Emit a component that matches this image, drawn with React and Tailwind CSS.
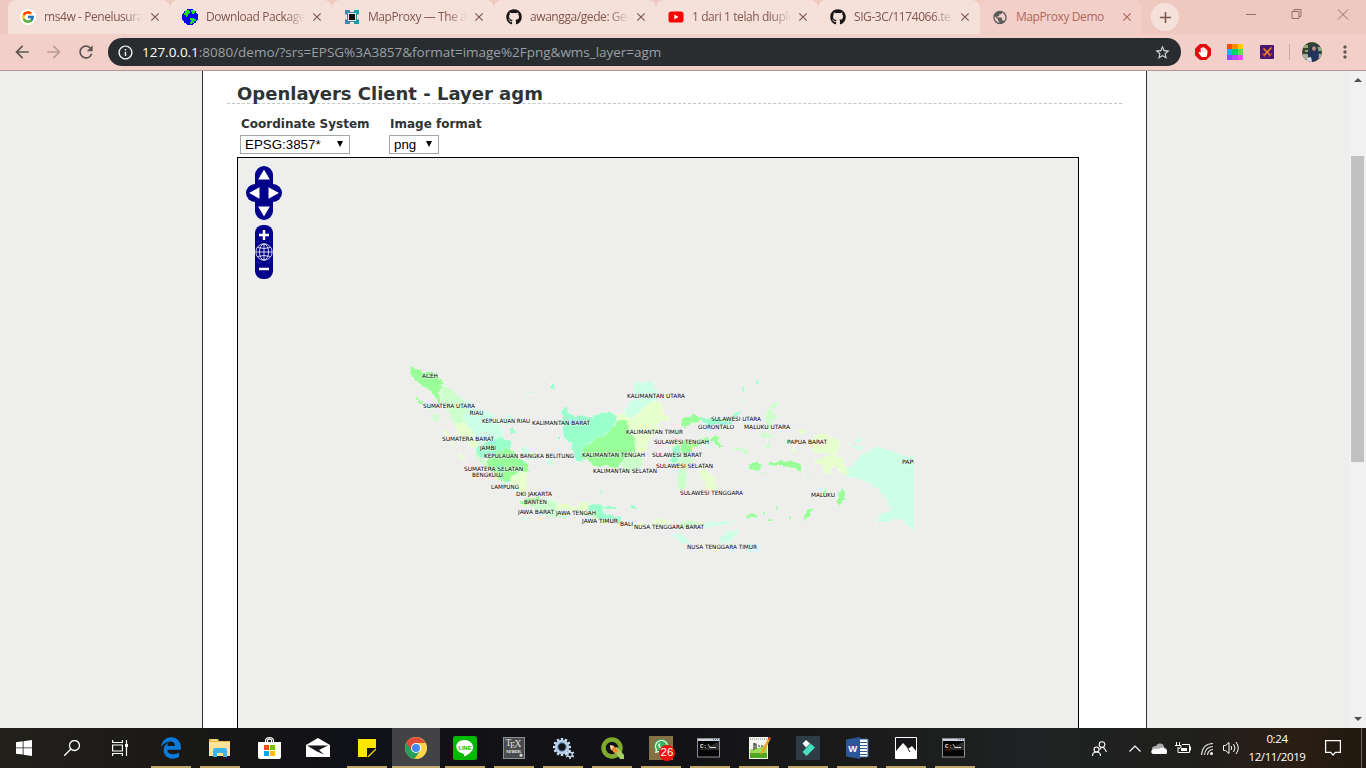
import React from 'react';
import { MdArrowBack, MdArrowForward, MdRefresh, MdInfoOutline, MdStarBorder, MdMoreVert, MdPublic, MdClose, MdAdd } from 'react-icons/md';
import { FaGithub, FaEdgeLegacy, FaHandPaper, FaWhatsapp } from 'react-icons/fa';
import { FcGoogle } from 'react-icons/fc';

const G = '#99ff99';
const L = '#ccffcc';
const A = '#99ffcc';
const M = '#ccffe6';
const Y = '#e6ffcc';

const west = [
  [G, '28,34 34,34 45,42 58,46 70,54 82,50 92,49 106,58 120,68 130,84 122,90 118,105 120,140 125,145 118,146 105,130 95,110 76,98 60,90 45,72 32,58'],
  [G, '44,127 52,128 62,138 70,142 68,148 56,142'],
  [L, '122,90 136,92 150,100 165,118 190,135 205,152 200,175 190,185 192,205 175,210 160,210 150,180 140,160 122,145'],
  [M, '205,152 225,160 250,165 285,180 300,210 312,236 305,255 275,262 235,270 215,235 195,212 190,185'],
  [Y, '163,208 195,205 215,230 232,255 237,276 215,278 200,255 175,235'],
  [A, '225,285 240,274 270,255 300,250 325,252 335,265 335,280 322,284 315,285 300,295 265,305 250,312 228,300'],
  [G, '300,290 318,280 335,284 345,295 350,305 375,318 385,330 382,355 360,352 340,362 325,385 300,375 280,352 262,335 258,316'],
  [L, '222,292 250,310 262,335 300,375 330,398 318,392 290,370 245,325 225,302'],
  [Y, '340,362 358,352 380,350 381,400 365,402 358,412 345,405 325,385'],
  [L, '98,172 110,180 118,198 108,198 98,184'],
  [L, '90,160 98,164 95,170'],
  [Y, '130,225 138,225 150,240 142,248 134,238'],
  [Y, '146,256 158,264 164,278 154,270'],
  [Y, '170,294 182,300 198,322 190,320'],
  [M, '310,190 330,180 340,186 328,195 325,214 312,208'],
  [A, '326,228 338,215 347,228 336,238'],
  [M, '360,280 375,275 388,290 400,302 396,315 376,312 370,296'],
  [M, '440,310 460,308 456,326 440,328'],
  [A, '450,88 462,90 464,102 454,104'],
  [A, '374,126 380,122 378,130'],
  [A, '390,112 396,114 393,118'],
  [G, '360,445 380,428 400,430 418,425 420,440 400,450 384,452'],
  [L, '400,442 420,436 445,432 462,436 472,452 482,465 500,480 500,490 460,488 430,478 400,455'],
];

const center = [
  [A, '35,145 40,132 48,127 55,142 75,158 90,150 112,156 125,158 150,147 175,142 202,150 195,170 190,185 175,205 160,215 135,220 120,235 97,248 98,290 80,292 72,275 68,260 65,238 45,220 40,205 38,175'],
  [G, '97,245 125,235 135,220 165,213 190,185 200,170 214,167 232,168 235,190 250,210 258,225 255,240 258,255 245,262 235,275 215,290 210,305 185,308 172,300 150,305 125,303 125,290 98,278'],
  [L, '245,262 278,262 276,282 278,305 245,318 228,322 215,308 215,290 235,275'],
  [Y, '195,165 205,145 225,148 240,160 270,140 290,120 310,105 330,115 338,125 340,148 352,150 360,162 335,168 322,185 318,205 298,222 290,240 280,265 258,262 254,240 258,225 235,190 232,168 214,167'],
  [M, '250,55 280,50 310,50 312,70 325,80 325,100 312,105 290,120 270,140 240,160 222,148 225,135 240,110 258,95 252,75'],
  [G, '392,182 398,160 415,152 425,158 430,148 442,150 455,158 450,168 425,175 410,182 402,195 398,180'],
  [G, '390,240 398,228 415,228 426,240 428,262 405,268 390,255'],
  [A, '446,160 470,158 500,162 525,162 540,158 540,180 500,176 480,180 458,172'],
  [A, '356,285 366,275 368,250 384,238 390,250 392,265 385,290 370,295'],
  [L, '385,290 400,268 420,270 428,290 410,310 408,350 410,375 385,378 380,350 386,330'],
  [Y, '448,305 475,315 478,330 500,340 490,352 500,362 498,375 480,378 465,368 468,345 450,335'],
  [G, '424,240 448,226 472,216 476,230 450,240 432,252'],
  [L, '450,210 472,204 470,210 452,214'],
  [G, '478,224 500,212 512,218 500,228 514,250 500,238 484,230'],
  [L, '0,400 20,410 25,430 40,440 0,434'],
  [Y, '20,422 50,418 82,425 92,408 118,414 118,440 100,448 70,440 25,438'],
  [A, '118,420 155,418 162,430 160,445 190,452 212,455 212,478 190,475 165,470 140,458 100,448 118,440'],
  [A, '160,425 182,423 204,424 190,433 162,432'],
  [A, '238,424 248,418 262,430 248,432'],
  [L, '216,470 236,465 252,478 236,488'],
  [Y, '254,480 264,470 280,475 280,490 262,492'],
  [Y, '300,478 325,460 345,468 362,465 356,485 320,486'],
  [L, '370,480 400,470 430,466 450,476 430,484 400,490 375,492'],
  [M, '455,475 480,472 510,470 540,470 540,478 500,482 460,488'],
  [M, '362,508 390,508 408,520 422,532 390,534 378,516'],
  [M, '518,530 530,510 560,495 560,510 535,530'],
  [A, '0,58 12,56 14,66 4,74'],
  [A, '24,212 30,216 30,226'],
  [A, '148,382 156,380 156,388'],
];

const east = [
  [M, '372,300 384,310 395,305 405,294 415,280 425,268 450,260 465,246 475,245 500,256 520,262 550,272 582,276 582,497 560,478 545,462 520,465 500,470 470,472 480,450 500,438 518,435 505,420 500,400 475,370 440,350 400,338 382,335 385,320'],
  [M, '395,218 420,222 424,236 405,225'],
  [M, '375,228 400,240 440,250 420,254 398,244'],
  [Y, '265,240 280,225 282,210 305,205 325,212 350,218 357,230 355,260 342,270 368,278 372,300 385,322 378,332 350,312 338,300 330,325 312,326 308,302 285,290 290,282 325,275 338,264 300,266 280,262'],
  [Y, '228,198 245,194 262,200 245,206'],
  [Y, '210,258 226,250 230,257 218,261'],
  [G, '85,300 95,293 110,292 127,303 120,315 100,319 88,312'],
  [G, '148,300 150,290 175,292 180,285 205,290 215,286 225,292 236,295 245,312 238,319 225,308 205,306 185,300 165,306'],
  [G, '352,410 355,390 366,370 372,380 378,400 364,415 358,423'],
  [G, '248,455 262,436 280,428 270,450 262,458 256,466'],
  [G, '78,455 95,445 112,450 102,458 88,458'],
  [G, '126,445 134,442 134,448'],
  [G, '138,463 158,464 158,468 140,468'],
  [G, '165,430 174,426 172,434'],
  [G, '204,456 214,456 212,462'],
  [G, '120,325 128,320 132,324'],
  [G, '256,326 264,324 264,330'],
  [L, '135,185 136,150 150,122 160,118 165,108 173,114 170,124 158,128 156,145 175,148 172,162 158,160 156,176 148,195'],
  [L, '122,204 155,208 158,218 140,215 142,226 126,214'],
  [L, '132,242 146,236 156,246 138,250'],
  [L, '30,252 55,248 80,254 85,272 60,256'],
  [A, '0,172 30,170 38,152 56,136 60,144 46,160 36,178 0,178'],
  [A, '106,64 108,48 113,42 113,56'],
  [A, '64,70 72,72 75,80 69,80'],
  [A, '64,100 68,102 66,110'],
  [M, '2,520 20,502 54,494 54,506 38,520 22,536 0,532'],
  [M, '0,470 20,468 24,474 2,478'],
  [M, '32,468 50,464 55,470 34,472'],
  [G, '302,388 310,378 322,370 318,384 306,392'],
  [G, '0,230 6,245 0,252'],
];

const labels = [
  ['ACEH', 422, 16, 378.5], ['SUMATERA UTARA', 423, 52, 408.5], ['RIAU', 469.5, 14, 415.5],
  ['KEPULAUAN RIAU', 482, 48, 423.5], ['KALIMANTAN BARAT', 532, 58, 425.5], ['SUMATERA BARAT', 442, 52, 442],
  ['JAMBI', 480, 16, 451], ['KEPULAUAN BANGKA BELITUNG', 484, 90, 458.5], ['SUMATERA SELATAN', 464, 59, 471.5],
  ['BENGKULU', 472, 31, 477.5], ['LAMPUNG', 491, 28, 490], ['DKI JAKARTA', 516, 36, 497],
  ['BANTEN', 524, 23, 505], ['JAWA BARAT', 518, 36, 515], ['JAWA TENGAH', 556, 40, 516],
  ['JAWA TIMUR', 582, 36, 523.5], ['BALI', 620, 13, 527], ['NUSA TENGGARA BARAT', 634, 70, 529.5],
  ['NUSA TENGGARA TIMUR', 687, 70, 549.5], ['KALIMANTAN UTARA', 627, 58, 398.5], ['KALIMANTAN TIMUR', 626, 57, 434.5],
  ['SULAWESI TENGAH', 654, 55, 445], ['KALIMANTAN TENGAH', 582, 63, 458], ['SULAWESI BARAT', 652, 50, 457.5],
  ['SULAWESI SELATAN', 656, 57, 468.5], ['KALIMANTAN SELATAN', 593, 64, 474], ['SULAWESI TENGGARA', 680, 63, 495.5],
  ['SULAWESI UTARA', 711, 50, 421.5], ['GORONTALO', 698, 36, 429.5], ['MALUKU UTARA', 744, 46, 430],
  ['PAPUA BARAT', 787, 40, 445], ['PAPUA', 902, 20, 465], ['MALUKU', 811, 24, 497.5],
];

function Regions({ shapes, x, y }) {
  return (
    <g transform={`translate(${x} ${y}) scale(0.33333)`}>
      {shapes.map(([fill, points], i) => (
        <g key={i}>
          <polygon points={points} fill="none" stroke="#fbfffb" strokeWidth="5" strokeDasharray="3 7" strokeOpacity="0.7" />
          <polygon points={points} fill={fill} />
        </g>
      ))}
    </g>
  );
}

function IndonesiaMap() {
  return (
    <svg className="block h-[570px] w-[840px]" viewBox="238 158 840 570">
      <defs>
        <clipPath id="extent"><rect x="238" y="158" width="676" height="570" /></clipPath>
        <filter id="coast" filterUnits="userSpaceOnUse" x="390" y="350" width="550" height="220" colorInterpolationFilters="sRGB">
          <feTurbulence type="fractalNoise" baseFrequency="0.22" numOctaves="2" seed="4" result="noise" />
          <feDisplacementMap in="SourceGraphic" in2="noise" scale="5" xChannelSelector="R" yChannelSelector="G" />
        </filter>
      </defs>
      <g clipPath="url(#extent)">
        <g filter="url(#coast)">
          <Regions shapes={west} x={400} y={355} />
          <Regions shapes={center} x={550} y={365} />
          <Regions shapes={east} x={720} y={365} />
          <path d="M910 457.500h8v74l-8-9z" fill={M} />
        </g>
        <g transform="translate(0 -0.7)" fontFamily="'DejaVu Sans', sans-serif" fontSize="5.9" fill="#000" stroke="#ffffff" strokeWidth="1.2" strokeOpacity="0.6" paintOrder="stroke">
          {labels.map(([t, x, w, y]) => (
            <text key={t} x={x} y={y} textLength={w} lengthAdjust="spacingAndGlyphs">{t}</text>
          ))}
        </g>
      </g>
    </svg>
  );
}

function EarthIcon() {
  return (
    <svg viewBox="0 0 16 16" className="size-4" shapeRendering="crispEdges">
      <circle cx="8" cy="8" r="8" fill="#0000fa" />
      <path d="M4 1h3v1h1v2H7v1H6v2H5v1H4V6H2V4h1V2h1z M9 1h3v1h1v2h-1v1h-2V3H9z M8 9h4v1h2v2h-2v2h-2v1H8v-2h1v-2H8z" fill="#1fe01f" />
    </svg>
  );
}

function MapProxyIcon() {
  return (
    <svg viewBox="0 0 14 14" className="size-3.5">
      <path d="M0 0h5v2h4V0h5v5h-2v4h2v5H9v-2H5v2H0V9h2V5H0z" fill="#2a93a7" />
      <path d="M3 3h8v8H3z" fill="#f5e0da" />
      <path d="M4 4h6v6H4z" fill="#111" />
      <path d="M0 5h2M12 5h2M0 9h2M12 9h2" stroke="#f5e0da" strokeWidth="1" />
    </svg>
  );
}

function YouTubeIcon() {
  return (
    <svg viewBox="0 0 16 12" className="h-3 w-4">
      <rect x="0.5" y="0.5" width="15" height="11" rx="2.6" fill="#f00" />
      <path d="M6.3 3.6v4.8L10.5 6z" fill="#fff" />
    </svg>
  );
}

const tabs = [
  ['ms4w - Penelusuran Google', <span className="flex size-4 items-center justify-center rounded-full bg-white"><FcGoogle size={14} /></span>],
  ['Download Packages', <EarthIcon />],
  ['MapProxy — The accelerating', <MapProxyIcon />],
  ['awangga/gede: Geospatial', <FaGithub size={16} color="#1b1616" />],
  ['1 dari 1 telah diupload', <YouTubeIcon />],
  ['SIG-3C/1174066.tex at', <FaGithub size={16} color="#1b1616" />],
];

function Tab({ title, icon, active, last }) {
  return (
    <div className={active ? 'flex h-[34px] w-[162px] items-center rounded-t-lg bg-[#f2d0c9] pl-3' : 'relative flex h-[34px] w-[162px] items-center rounded-t-lg bg-[#f5e0da] pl-3'}>
      <div className="flex size-4 shrink-0 items-center justify-center">{icon}</div>
      <div
        className={active
          ? "ml-2 w-[100px] overflow-hidden font-['Open_Sans',sans-serif] text-[12px] leading-4 tracking-[-0.42px] whitespace-nowrap text-[#b0685c]"
          : "ml-2 w-[99px] overflow-hidden [mask-image:linear-gradient(to_right,black_80%,transparent)] font-['Open_Sans',sans-serif] text-[12px] leading-4 tracking-[-0.42px] whitespace-nowrap text-[#80584f]"}
      >
        {title}
      </div>
      <MdClose className={active ? 'ml-[4px] shrink-0' : 'ml-[5px] shrink-0'} size={14} color={active ? '#b0685c' : '#7d5750'} />
      {!active && !last && <div className="absolute top-[7px] right-[-1px] h-5 w-px bg-[#a98780]" />}
    </div>
  );
}

function TabStrip() {
  return (
    <div className="flex h-[34px] bg-[#efc8c0] pl-2">
      {tabs.map(([title, icon], i) => <Tab key={i} title={title} icon={icon} last={i === tabs.length - 1} />)}
      <Tab active title="MapProxy Demo" icon={<MdPublic size={17} color="#5b5b5b" />} />
      <div className="mt-[3px] ml-[9px] flex size-7 items-center justify-center rounded-full bg-[#f5e0da]">
        <MdAdd size={19} color="#7d5750" />
      </div>
      <svg className="ml-[67px] h-[34px] w-[110px]" viewBox="0 0 110 34" fill="none" stroke="#8e736d">
        <path d="M0 14.500h10M46 11.500h7v7h-7zM48 11.500v-2h7v7h-2M92 9.500l10 10M102 9.500l-10 10" />
      </svg>
    </div>
  );
}

function Toolbar() {
  return (
    <div className="flex h-[37px] items-center border-b border-[#b19590] bg-[#f2d0c9] pl-3">
      <MdArrowBack size={20} color="#5f5653" />
      <MdArrowForward className="ml-3" size={20} color="#b99d97" />
      <MdRefresh className="ml-3" size={20} color="#5f5653" />
      <div className="ml-3 flex h-7 w-[1073px] items-center rounded-full bg-[#292d30] pl-[9px]">
        <MdInfoOutline size={17} color="#f1f3f4" />
        <div className="ml-2 flex-1 font-['Open_Sans',sans-serif] text-[13.500px] leading-5 tracking-[-0.015px] whitespace-nowrap text-[#9aa0a6]">
          <span className="text-white">127.0.0.1</span>:8080/demo/?srs=EPSG%3A3857&amp;format=image%2Fpng&amp;wms_layer=agm
        </div>
        <MdStarBorder className="mr-[10px]" size={17} color="#d5d8da" />
      </div>
      <div className="ml-[14px] flex size-4 items-center justify-center bg-[#e30b0b] [clip-path:polygon(30%_0,70%_0,100%_30%,100%_70%,70%_100%,30%_100%,0_70%,0_30%)]">
        <FaHandPaper size={10} color="#fff" />
      </div>
      <svg className="ml-4 size-4" viewBox="0 0 16 16" shapeRendering="crispEdges">
        <path fill="#ff4d00" d="M0 0h5v5H0z" /><path fill="#ff8a00" d="M5 0h6v5H5z" /><path fill="#ffd000" d="M11 0h5v5h-5z" />
        <path fill="#00b8ff" d="M0 5h5v6H0z" /><path fill="#00d464" d="M5 5h6v6H5z" /><path fill="#5fe04a" d="M11 5h5v6h-5z" />
        <path fill="#8a4bff" d="M0 11h5v5H0z" /><path fill="#b44bff" d="M5 11h6v5H5z" /><path fill="#f545ff" d="M11 11h5v5h-5z" />
      </svg>
      <svg className="ml-[17px] size-[14px]" viewBox="0 0 14 14">
        <rect width="14" height="14" rx="1" fill="#4a1670" />
        <path d="M3.500 3.500l7 7M11.500 2.500L4 10.500" stroke="#ff8c1a" strokeWidth="1.500" />
        <path d="M2.500 8.500l3 3M11.500 8.500l-3 3" stroke="#c9562a" strokeWidth="1.200" />
      </svg>
      <div className="ml-[15px] h-4 w-px bg-[#ccaaa3]" />
      <svg className="ml-[12px] size-5" viewBox="0 0 20 20">
        <clipPath id="avatar"><circle cx="10" cy="10" r="10" /></clipPath>
        <g clipPath="url(#avatar)">
          <rect width="20" height="20" fill="#36472f" />
          <path d="M0 3h6v3H0zM14 5h6v4h-6zM3 8h3v2H3z" fill="#8fa878" />
          <path d="M1 12h5v5H1zM15 12h5v4h-5z" fill="#a9b0a2" />
          <path d="M8 6c1-5 8-4 8 1l1 8-5 5H7l1-6-3-2z" fill="#24345c" />
          <ellipse cx="12" cy="6.500" rx="2" ry="2.300" fill="#b98a76" />
          <path d="M5 16l4-1 1 5H4z" fill="#dfe2ea" />
        </g>
      </svg>
      <MdMoreVert className="ml-[13px]" size={20} color="#5f5653" />
    </div>
  );
}

function Select({ label, value, className }) {
  return (
    <div className={className}>
      <div className="pl-px font-['DejaVu_Sans',sans-serif] text-[12px] leading-[20px] font-bold whitespace-nowrap text-[#2e3436]">{label}</div>
      <div className="mt-px flex h-[19px] w-fit items-center border border-[#a6a6a6] bg-white pl-1 font-['Liberation_Sans',Arial,sans-serif] text-[13.333px] text-black">
        <span className="pt-px leading-4">{value}</span>
        <svg className="mr-[6px] mb-px ml-auto h-[6px] w-[6px]" viewBox="0 0 6 6"><path d="M0 0h6L3 6z" fill="#000" /></svg>
      </div>
    </div>
  );
}

function PanZoom() {
  return (
    <svg className="absolute top-2 left-2 h-[114px] w-9" viewBox="0 0 36 114">
      <g fill="#00008b">
        <rect x="9" y="0" width="18" height="54" rx="9" />
        <rect x="0" y="18" width="36" height="18" rx="9" />
        <rect x="9" y="59" width="18" height="54" rx="8" />
      </g>
      <path d="M18 3.500l5.800 10h-11.600zM18 50.500l5.800-10h-11.600zM3 27l10.500-5.800v11.600zM33 27l-10.500-5.800v11.600z" fill="#fff" />
      <path d="M13 69h10M18 64v10M13 103h10" stroke="#fff" strokeWidth="2.500" />
      <g fill="none" stroke="#fff" strokeWidth="0.800">
        <circle cx="18" cy="86" r="8.200" />
        <ellipse cx="18" cy="86" rx="4.500" ry="8" />
        <path d="M18 78v16M10 86h16M11.500 81.500q6.500 2 13 0M11.500 90.500q6.500-2 13 0" />
      </g>
    </svg>
  );
}

function Page() {
  return (
    <div className="flex h-[657px] bg-[#eeeeec]">
      <div className="ml-[202px] w-[945px] border-x border-[#2e3436] bg-white pl-6">
        <div className="mt-[9px] h-6 w-[895px] border-b border-dashed border-[#c4c6c6] pl-[10px]">
          <h2 className="font-['DejaVu_Sans',sans-serif] text-[18px] leading-[27px] font-bold whitespace-nowrap text-[#2e3436]">Openlayers Client - Layer agm</h2>
        </div>
        <div className="flex pt-[10px] pl-[13px]">
          <Select label="Coordinate System" value="EPSG:3857*" className="w-[149px] [&>div:last-child]:w-[110px]" />
          <Select label="Image format" value="png" className="[&>div:last-child]:w-[50px]" />
        </div>
        <div className="relative mt-[3px] ml-[10px] h-[571px] w-[842px] overflow-hidden border border-b-0 border-black bg-[#eeeeec]">
          <IndonesiaMap />
          <PanZoom />
        </div>
      </div>
      <div className="ml-auto flex w-[17px] flex-col items-center bg-[#f1f1f1]">
        <svg className="mt-[7px] h-[4px] w-[8px]" viewBox="0 0 8 4"><path d="M0 4L4 0l4 4z" fill="#505050" /></svg>
        <div className="mt-[74px] h-[306px] w-[13px] bg-[#c1c1c1]" />
        <svg className="mt-auto mb-[7px] h-[4px] w-[8px]" viewBox="0 0 8 4"><path d="M0 0l4 4 4-4z" fill="#505050" /></svg>
      </div>
    </div>
  );
}

function Terminal() {
  return (
    <svg className="mr-[3px] h-[20px] w-[23px]" viewBox="0 0 23 20">
      <rect x="0.500" y="0.500" width="22" height="18.500" fill="#050505" stroke="#8d8f94" />
      <path d="M1 1h21v2H1z" fill="#cfd3dc" /><path d="M16 1.500h5" stroke="#5b6da0" strokeDasharray="1 1" />
      <path d="M1 12Q12 10 22 3v9z" fill="#555" opacity="0.500" />
      <text x="3" y="9.500" fontSize="6" fontFamily="'Liberation Mono', monospace" fontWeight="bold" fill="#eee">C:\.</text><path d="M13 9.500h6" stroke="#ddd" />
    </svg>
  );
}

const gearTeeth = [0, 30, 60, 90, 120, 150, 180, 210, 240, 270, 300, 330];

const apps = [
  { line: true, icon: <FaEdgeLegacy size={22} color="#0a7bdc" /> },
  { line: true, icon: (
    <svg className="h-[20px] w-[22px]" viewBox="0 0 22 20">
      <path d="M0 1h9l1 2h11v15H0z" fill="#e9bb4c" /><path d="M1 4h20v14H0V4z" fill="#ffe395" /><path d="M2 2h6" stroke="#fff3c4" />
      <path d="M4 19v-7q0-2 2-2h10q2 0 2 2v7h-4v-4H8v4z" fill="#3db4e6" />
    </svg>) },
  { icon: (
    <svg className="h-[24px] w-[23px]" viewBox="0 0 23 24">
      <path d="M7.500 7V5q0-3.500 4-3.500t4 3.500v2M9.500 6V4q2-2 4 0v2" fill="none" stroke="#fff" strokeWidth="1.200" />
      <path d="M0 6h23v15q0 2-2 2H2q-2 0-2-2z" fill="#fff" />
      <path fill="#f25022" d="M6 9h5v5H6z" /><path fill="#7fba00" d="M12 9h5v5h-5z" /><path fill="#00a4ef" d="M6 15h5v5H6z" /><path fill="#ffb900" d="M12 15h5v5h-5z" />
    </svg>) },
  { icon: (
    <svg className="h-[20px] w-6" viewBox="0 0 24 20"><path d="M0 7l12-7 12 7v12H0z" fill="#fff" /><path d="M1 7.500h21l-9 4.500 5 4.500-7-3z" fill="#15151a" /></svg>) },
  { line: true, icon: (
    <svg className="size-[18px]" viewBox="0 0 18 18"><path d="M0 0h18v18H0z" fill="#ffe600" /><path d="M9 18V9h9v1l-8 8z" fill="#121216" /><path d="M18 10v8h-8z" fill="#121216" /><path d="M9.500 9.500h8l-8 8z" fill="#121216" /><path d="M10 18l8-8" stroke="#ffe600" strokeWidth="1.200" /></svg>) },
  { line: true, active: true, icon: (
    <svg className="size-[22px]" viewBox="0 0 22 22">
      <circle cx="11" cy="11" r="11" fill="#fdd34c" />
      <path d="M11 11L1.500 5.500A11 11 0 0 0 9.500 21.900L15.500 13z" fill="#24a05a" />
      <path d="M11 11l4.500 2.600-5.200 8.400A11 11 0 0 0 20.600 6H11z" fill="#fdd34c" />
      <path d="M11 11L6.300 13.500 1.500 5.500A11 11 0 0 1 20.500 6H11z" fill="#e14b3c" />
      <circle cx="11" cy="11" r="5" fill="#fff" /><circle cx="11" cy="11" r="4" fill="#4688f1" />
    </svg>) },
  { line: true, icon: (
    <svg className="size-6" viewBox="0 0 24 24">
      <rect width="24" height="24" rx="2.500" fill="#00b900" />
      <path d="M12 4C2 4 1 13 7 16.500l4 1.500v2.500c5-2 9-5.500 9-9.500s-4-7-8-7z" fill="#fff" />
      <text x="5.500" y="13.500" fontSize="5.800" textLength="13" lengthAdjust="spacingAndGlyphs" fontWeight="bold" fontFamily="'Liberation Sans', sans-serif" fill="#00b900">LINE</text>
    </svg>) },
  { line: true, icon: (
    <svg className="size-[22px]" viewBox="0 0 22 22">
      <rect x="0.500" y="0.500" width="21" height="21" fill="#494b4c" stroke="#8c8e8f" />
      <g fill="#e0e0e0" fontFamily="'Liberation Serif', serif">
        <text x="2.500" y="9" fontSize="9.500">T</text><text x="7" y="11" fontSize="9">E</text><text x="11.500" y="9.500" fontSize="9.500">X</text>
        <text x="3" y="16" fontSize="5" fontWeight="bold" textLength="15">MAKER</text>
      </g>
      <circle cx="18" cy="18.300" r="1.500" fill="#ddd" />
    </svg>) },
  { line: true, icon: (
    <svg className="h-[23px] w-6" viewBox="0 0 24 23">
      <g stroke="#cfe0f2" strokeWidth="2.400">{gearTeeth.map(a => <path key={a} d="M11 1v3" transform={`rotate(${a} 11 10)`} />)}</g>
      <circle cx="11" cy="10" r="5.700" fill="none" stroke="#b4cde9" strokeWidth="3" /><circle cx="11" cy="10" r="4.200" fill="none" stroke="#6f93bf" />
      <g stroke="#d9e5f2" strokeWidth="1.500">{gearTeeth.filter(a => a % 60 === 0).map(a => <path key={a} d="M19 13v2" transform={`rotate(${a} 19 17.500)`} />)}</g>
      <circle cx="19" cy="17.500" r="2.300" fill="none" stroke="#b9cfe5" strokeWidth="1.500" />
    </svg>) },
  { line: true, icon: (
    <svg className="h-[23px] w-[23px]" viewBox="0 0 23 23">
      <circle cx="11" cy="11" r="8.500" fill="none" stroke="#80aa2b" strokeWidth="4.500" />
      <path d="M12 12l4-2 7 8v4h-4z" fill="#a6cf68" /><path d="M9.500 8.500l4 1 4 4.500-3 3-5-5z" fill="#f28a35" /><path d="M9 8l4 1-3 4z" fill="#ffe4a2" />
    </svg>) },
  { line: true, icon: (
    <div className="relative flex size-6 items-center justify-center bg-[#857244]">
      <div className="mb-1 flex size-[15px] items-center justify-center rounded-full bg-[#35b557]"><FaWhatsapp size={15} color="#fff" /></div>
      <div className="absolute top-[9px] left-[10px] flex size-4 items-center justify-center rounded-full bg-[#f30d0d] font-['Liberation_Sans',sans-serif] text-[11.500px] leading-none text-white">26</div>
    </div>) },
  { line: true, icon: <Terminal /> },
  { line: true, icon: (
    <svg className="h-6 w-[23px]" viewBox="0 0 23 24">
      <path d="M1 1h19v22H1z" fill="#f4f6f1" /><path d="M2 13q8 1 17-5v14H2z" fill="#9fdc55" /><path d="M2 17h17v5H2z" fill="#4fa81f" />
      <path d="M2 3h17" stroke="#bbb" strokeWidth="2" strokeDasharray="1 1" />
      <path d="M6 7v7M5.500 8H8v5M10 10h2M13 10h2" fill="none" stroke="#333" strokeWidth="1.200" />
      <path d="M12 19l2-5 7-13 2 1-7 14z" fill="#f0a51e" /><path d="M20 3l1-2 2 1-1 2z" fill="#b9352b" />
    </svg>) },
  { line: true, icon: (
    <svg className="size-6" viewBox="0 0 24 24"><path d="M0 0h24v24H0z" fill="#2e3c45" /><path d="M6.500 7.500l3.500-3.500 4 3.500-4 4z" fill="#fff" /><path d="M6.500 16l8-8.500 4.500 4-8.500 8.500z" fill="#45e0c0" /></svg>) },
  { line: true, icon: (
    <svg className="h-[22px] w-[23px]" viewBox="0 0 23 22">
      <path d="M11 2h11v18H11z" fill="#fff" stroke="#2b579a" /><path d="M14 5.500h7M14 8.500h7M14 11.500h7M14 14.500h7M14 17.500h7" stroke="#2b579a" />
      <path d="M0 2.500L14 0v22L0 19.500z" fill="#2b579a" /><text x="2.300" y="14.500" fontSize="9.500" fontWeight="bold" fontFamily="'Liberation Sans', sans-serif" fill="#fff">W</text>
    </svg>) },
  { line: true, icon: (
    <svg className="size-[22px]" viewBox="0 0 22 22"><path d="M0.500 0.500h21v21H0.500z" fill="#16161a" stroke="#fff" /><path d="M1 14l7-8 5 6 4-3 4 5v7H1z" fill="#fff" /><path d="M8 6l4 4 1 3-3-3z" fill="#ddd" /><path d="M13 12l2 3" stroke="#222" /></svg>) },
  { line: true, icon: <Terminal /> },
];

function Taskbar() {
  return (
    <div className="flex h-10 bg-[linear-gradient(to_right,#23211c_0%,#1a1916_12%,#101116_25%,#131317_50%,#1b1a1a_62%,#1f2323_76%,#201f1c_88%,#2b1e14_95%,#21180f_100%)]">
      <div className="flex w-[147px] items-center">
        <div className="flex w-12 justify-center"><svg className="size-4" viewBox="0 0 16 16" fill="#fff"><path d="M0 2.300l6.700-1v6.200H0zM7.500 1.200L16 0v7.500H7.500zM0 8.300h6.700v6.300L0 13.700zM7.500 8.300H16V16l-8.500-1.200z" /></svg></div>
        <div className="flex w-12 justify-center"><svg className="size-4" viewBox="0 0 16 16" fill="none" stroke="#fff" strokeWidth="1.300"><circle cx="10.500" cy="5.500" r="5" /><path d="M7 9l-7 7" /></svg></div>
        <div className="flex w-12 justify-center"><svg className="size-4" viewBox="0 0 16 16" fill="none" stroke="#fff" strokeWidth="1.200"><path d="M0.600 0v2.500h9.800V0M0.600 5h9.800v6H0.600zM0.600 16v-2.500h9.800V16M14.500 0v16" /><path d="M13 4h3v3h-3z" fill="#fff" stroke="none" /></svg></div>
      </div>
      <div className="flex gap-px">
        {apps.map((app, i) => (
          <div key={i} className={app.active ? 'flex w-12 flex-col bg-[#434347]' : 'flex w-12 flex-col items-center'}>
            <div className="flex h-[38px] items-center justify-center pt-[2px]">{app.icon}</div>
            {app.line && <div className={app.active ? 'h-[2px] w-12 bg-[#c5ad6d]' : 'h-[2px] w-10 bg-[#bea766]'} />}
          </div>
        ))}
      </div>
      <div className="ml-auto flex items-center">
        <div className="flex w-12 justify-center">
          <svg className="h-[15px] w-[15px]" viewBox="0 0 15 15" fill="none" stroke="#fff" strokeWidth="1.100"><circle cx="10" cy="3.500" r="2.800" /><path d="M7.500 8.500Q10 5 12.500 7.500L14.500 11" /><circle cx="4.500" cy="8.500" r="2.500" /><path d="M0.500 15q0-4 4-4t4 4" /></svg>
        </div>
        <div className="flex w-6 justify-center"><svg className="h-[7px] w-3" viewBox="0 0 12 7" fill="none" stroke="#fff" strokeWidth="1.200"><path d="M0.500 6.500L6 1l5.500 5.500" /></svg></div>
        <div className="flex w-6 justify-center"><svg className="h-[11px] w-4" viewBox="0 0 16 11"><path d="M1 8q-1-5 4-5Q6 0 9 0.500q4 0 4 4 3 0 3 4z" fill="#aaa" /><path d="M2 11q-3-1-1-4 3-2 6-1 5-3 7 0 3 1 1.500 5z" fill="#fff" /></svg></div>
        <div className="flex w-6 justify-center"><svg className="mb-px h-3 w-4" viewBox="0 0 16 12" fill="none" stroke="#fff"><path d="M5 10.500h9.500v-8H7M1.500 0v3M4.500 0v3M0 3.500h6v2q-3 2-3 0v5h2" /><path d="M15 5h1v3h-1z" fill="#fff" /><path d="M6 6h6v3H6z" fill="#fff" stroke="none" /></svg></div>
        <div className="flex w-6 justify-center"><svg className="mt-[2px] h-3 w-3" viewBox="0 0 12 12" fill="none" stroke="#ddd" strokeWidth="1.200"><path d="M0.500 12Q1 1 12 0.500M3.500 12Q4 4 12 3.500M6.500 12Q7 7 12 6.500" /><circle cx="10.500" cy="10.500" r="1.500" fill="#fff" stroke="none" /></svg></div>
        <div className="flex w-6 justify-center"><svg className="h-[14px] w-4" viewBox="0 0 16 14" fill="none" stroke="#fff"><path d="M0.500 4.500h2L6 1.500v11L2.500 9.500h-2zM8 5q1.500 2 0 4M10.500 3q3 4 0 8M13 1q4.500 6 0 12" /></svg></div>
        <div className="w-[68px] text-center font-['Open_Sans',sans-serif] text-[11.500px] leading-[18px] tracking-[-0.4px] text-white"><div>0:24</div><div>12/11/2019</div></div>
        <div className="flex w-[44px] justify-center"><svg className="h-4 w-4" viewBox="0 0 16 16" fill="none" stroke="#fff" strokeWidth="1.200"><path d="M0.600 0.600h14.800v11.800h-5L8 15l-2.400-2.600h-5z" /></svg></div>
        <div className="mr-1 ml-[6px] h-10 w-px bg-[#6b655c]" />
      </div>
    </div>
  );
}

export default function App() {
  return (
    <div className="h-[768px] w-[1366px] overflow-hidden">
      <TabStrip />
      <Toolbar />
      <Page />
      <Taskbar />
    </div>
  );
}
